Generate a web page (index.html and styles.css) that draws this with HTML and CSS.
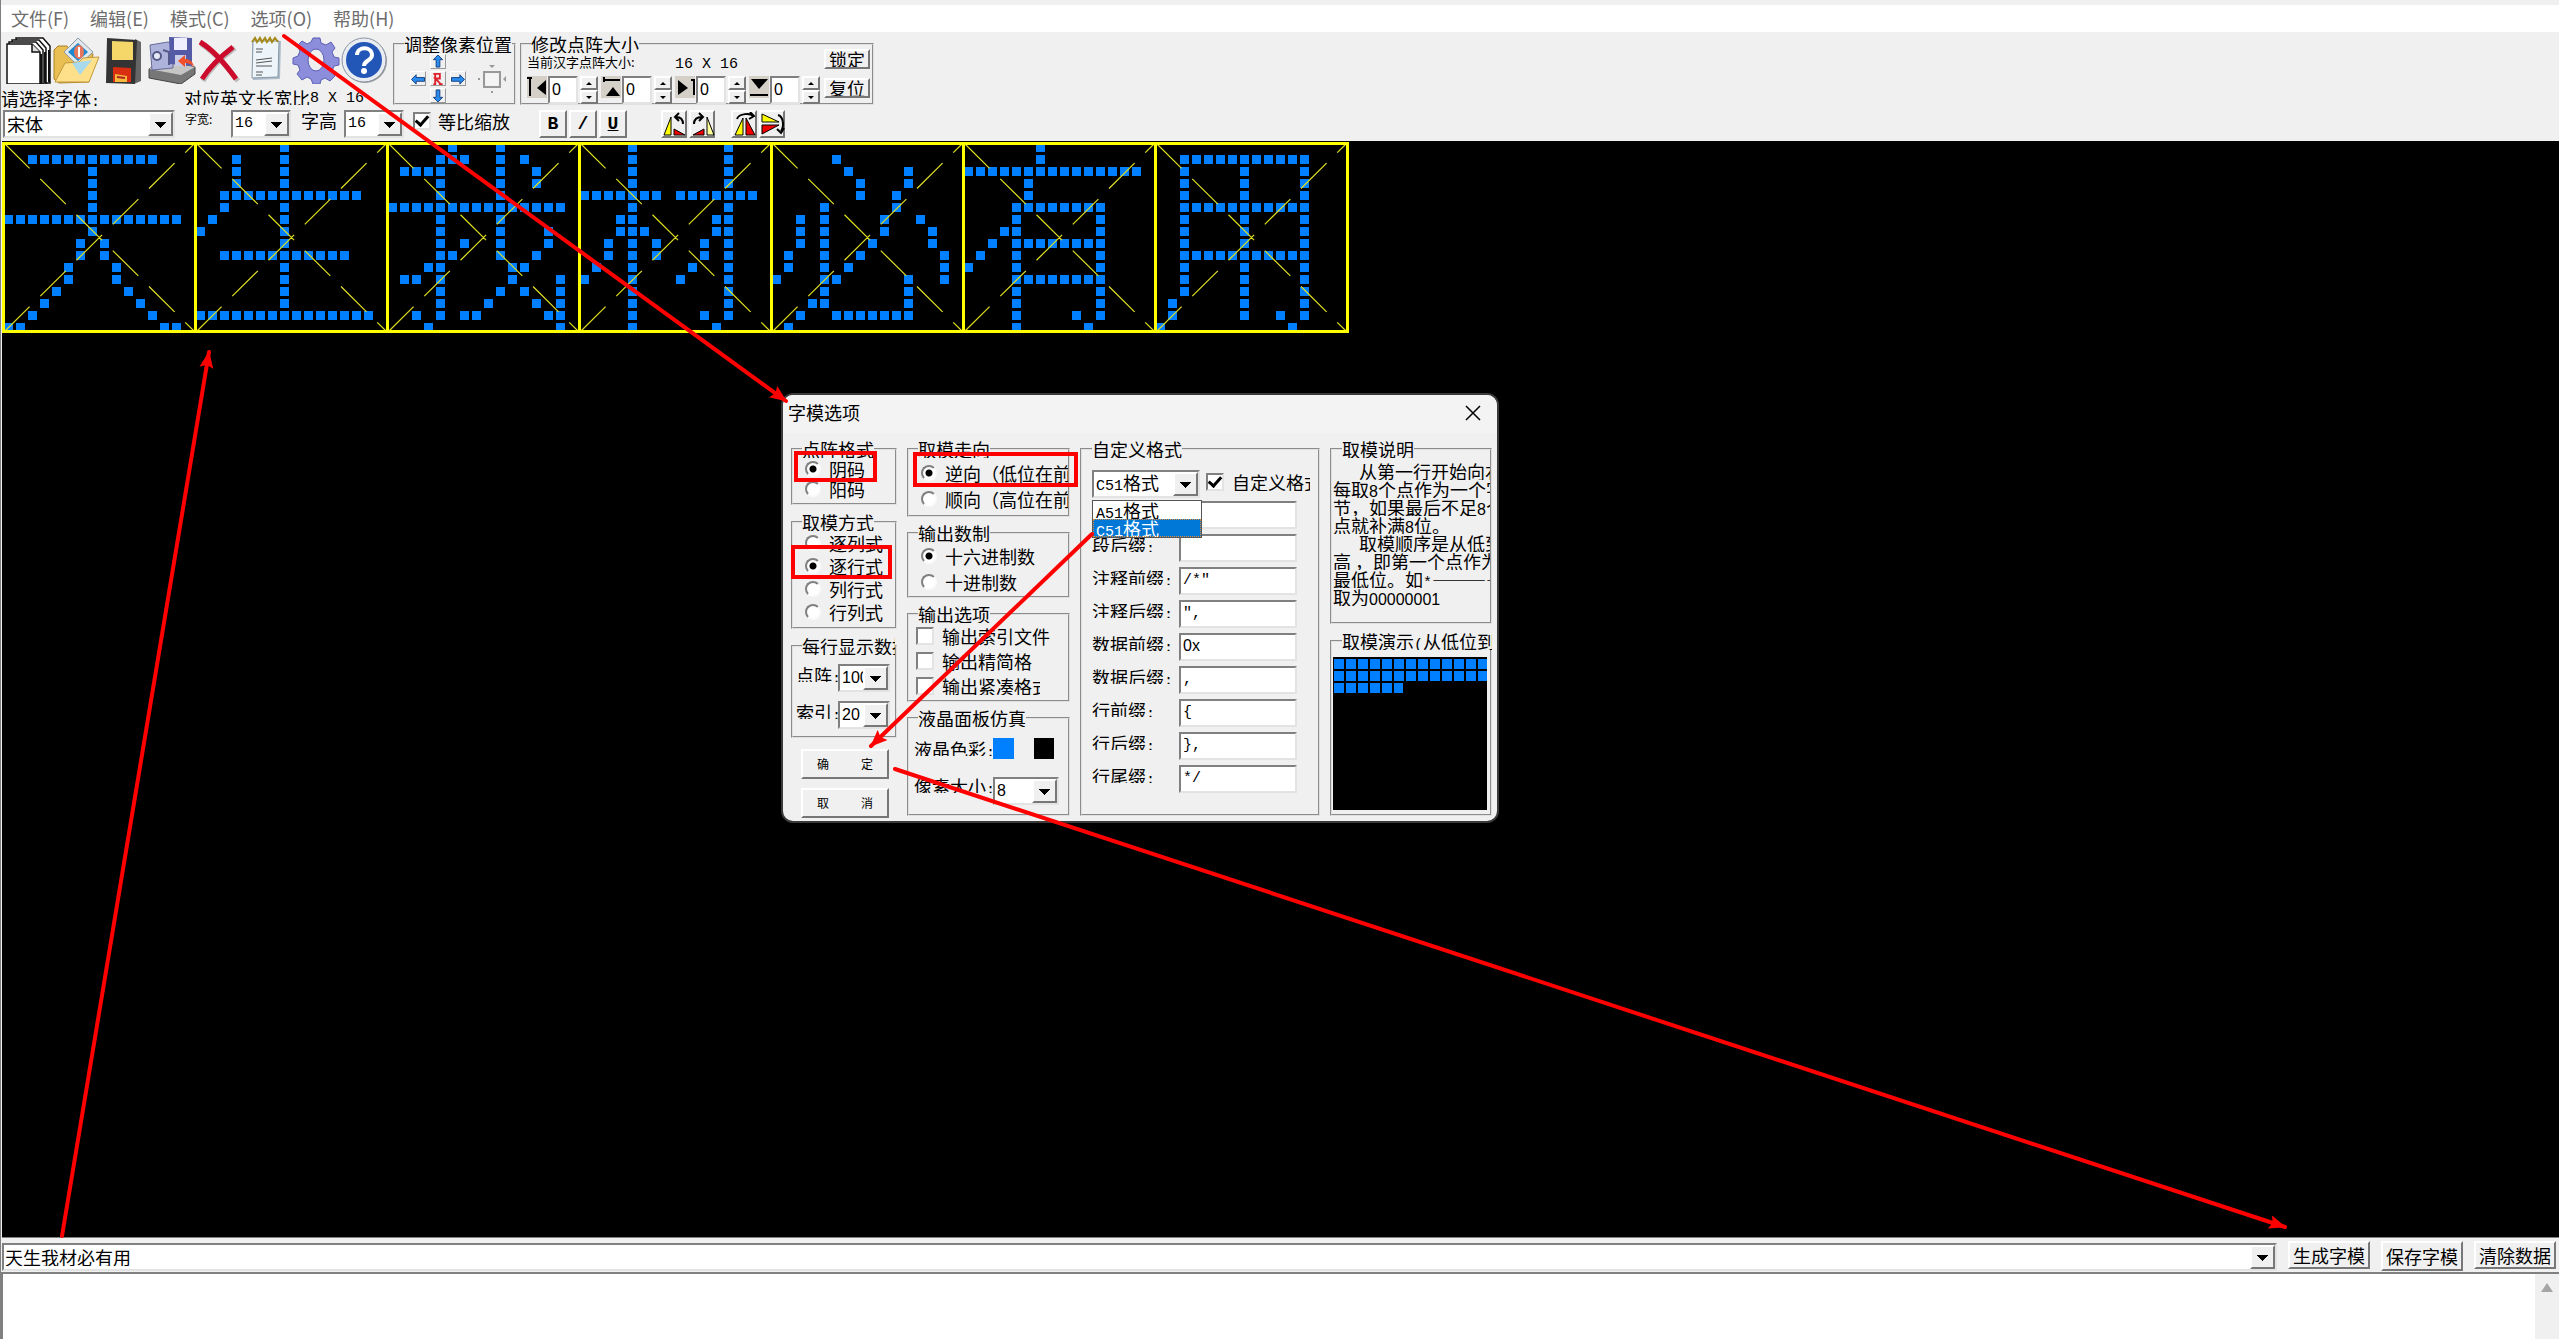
FILE: index.html
```html
<!DOCTYPE html>
<html lang="zh-CN">
<head>
<meta charset="utf-8">
<title>字模提取</title>
<link rel="stylesheet" href="styles.css">
</head>
<body>
<div class="app">
  <nav class="menu">
    <a href="#file">文件(F)</a><a href="#edit">编辑(E)</a><a href="#mode">模式(C)</a><a href="#options">选项(O)</a><a href="#help">帮助(H)</a>
  </nav>

  <header class="toolbar">
    <div class="upper">
      <div class="main-tools">
        <div class="icons">
          <button class="tool" aria-label="新建"><svg viewBox="0 0 48 48"><g fill="#fff" stroke="#111" stroke-width="1.5"><path d="M12 2h27l7 8v37H16z"/><path d="M8 4h27l7 8v36H12z"/><path d="M5 6h27l7 8v34H8z"/><path d="M3 8h25l8 8v32H3z"/></g><path d="M28 8v8h8" fill="#ddd" stroke="#111" stroke-width="1.5"/><path d="M37 18v30M41 16v31M45 14v32" stroke="#111" stroke-width="2"/></svg></button>
          <button class="tool" aria-label="打开"><svg viewBox="0 0 48 48"><path d="M2 14l4-4h9l4 5 22 3-4 28-30 1-5-4z" fill="#e9be52" stroke="#a98227"/><path d="M26 2l15 14-15 14L12 16z" fill="#dfe9ee" stroke="#8d9aa2"/><path d="M26 7l10 9-10 9-10-9z" fill="#1d87cf"/><ellipse cx="27" cy="16" rx="5" ry="7" fill="#e7765d"/><path d="M27 11v10" stroke="#fff" stroke-width="2"/><path d="M3 46l10-19 14-1 4-4 16-1-10 25z" fill="#ffe08a" stroke="#c19a3b"/><path d="M20 27l20-3-12 15z" fill="#a8d9ec"/></svg></button>
          <button class="tool" aria-label="保存"><svg viewBox="0 0 48 48"><path d="M35 3l6 3v39l-7 3z" fill="#666"/><path d="M7 2l30 2-2 44-29-1z" fill="#333"/><path d="M12 5l21 1v18H12z" fill="#f5d769"/><path d="M13 31l18 1v14H13z" fill="#d92e12"/><path d="M15 38l12 2v6H15z" fill="#f6b93c"/><path d="M17 41l8 1" stroke="#a22" stroke-width="2"/></svg></button>
          <button class="tool" aria-label="另存"><svg viewBox="0 0 48 48"><path d="M1 33l12-8 34 6v7L33 48 1 42z" fill="#777" stroke="#444"/><path d="M1 33l12-8 34 6-14 8z" fill="#c6c6c6"/><path d="M2 9l18-3 5 2v24L4 34z" fill="#aeb3dc" stroke="#666a96"/><circle cx="9" cy="20" r="4" fill="#e8e9f7" stroke="#555a88" stroke-width="2"/><path d="M15 14l6 2v13" fill="none" stroke="#555a88" stroke-width="2"/><path d="M21 1l23 1v28l-22-2z" fill="#545aa6"/><path d="M26 2h13v12H26z" fill="#eef"/><path d="M27 19h11v11H27z" fill="#c9cbe8"/><path d="M46 31c-1-6-5-8-9-8v-4l-7 6 7 6v-4c4 0 6 1 9 4z" fill="#f0502a"/></svg></button>
          <button class="tool" aria-label="删除"><svg viewBox="0 0 48 48"><path d="M5 8c10 6 24 20 37 37M39 12C25 22 14 33 7 45" fill="none" stroke="#bbb" stroke-width="5"/><path d="M4 6c10 6 24 20 36 37M37 11C24 21 13 32 6 43" fill="none" stroke="#cc0a2c" stroke-width="5"/></svg></button>
          <button class="tool" aria-label="记事"><svg viewBox="0 0 48 48"><path d="M8 6l29-1-1 38-27 1z" fill="#aebccb"/><path d="M9 5h26l-1 36-26 1z" fill="#edf5fa" stroke="#8797a5"/><path d="M8 6l3-4 2 4 3-4 2 4 3-4 2 4 3-4 2 4 3-4 3 4" fill="none" stroke="#a58a19" stroke-width="2"/><path d="M12 13h7M12 16h6M12 24l16-2M12 27l16-2M12 30h16M12 36h7M12 39h6" stroke="#555"/></svg></button>
          <button class="tool" aria-label="选项"><svg viewBox="0 0 48 48"><path d="M21 2h7l1 5 5 2 5-3 4 6-3 4 2 5 5 1v7l-5 1-2 5 3 5-5 5-5-3-4 2-1 4h-7l-2-5-4-2-5 3-5-6 3-4-2-5-5-1v-6l5-2 2-5-3-5 5-5 5 3 4-2z" fill="#8c8edc" stroke="#5b5eb4"/><ellipse cx="24" cy="24" rx="8" ry="11" fill="#efefef" stroke="#5b5eb4"/></svg></button>
          <button class="tool" aria-label="帮助"><svg viewBox="0 0 48 48"><circle cx="25" cy="25" r="22" fill="#999"/><circle cx="24" cy="24" r="22" fill="#e9edf2" stroke="#8a93a0"/><circle cx="24" cy="24" r="18" fill="#2257b8"/><path d="M17 19c0-9 15-9 15 0 0 6-8 5-8 11" fill="none" stroke="#fff" stroke-width="4"/><circle cx="24" cy="35" r="3" fill="#fff"/></svg></button>
        </div>
        <div class="captions">
          <label class="font-caption" for="font">请选择字体<span class="n">:</span></label>
          <span class="cut">对应英文长宽比</span><span class="n">8 X 16</span>
        </div>
      </div>

      <fieldset class="shift">
        <legend>调整像素位置</legend>
        <div class="shift-body">
          <div class="pad">
            <button class="up" aria-label="上移"><svg viewBox="0 0 14 14"><path d="M7 0l5 5H9v8H5V5H2z" fill="#2b8cf0" stroke="#123c7c"/></svg></button>
            <button class="left" aria-label="左移"><svg viewBox="0 0 14 14"><path d="M0 8l5-5v3h9v4H5v3z" fill="#2b8cf0" stroke="#123c7c"/></svg></button>
            <button class="reset" aria-label="还原"><svg viewBox="0 0 14 14"><path d="M4 13V2h5v5H4l6 6M2 2h2M2 13h3M8 13h4" fill="none" stroke="#e0202c" stroke-width="2"/></svg></button>
            <button class="right" aria-label="右移"><svg viewBox="0 0 14 14"><path d="M14 8L9 3v3H0v4h9v3z" fill="#2b8cf0" stroke="#123c7c"/></svg></button>
            <button class="down" aria-label="下移"><svg viewBox="0 0 14 14"><path d="M7 14l5-5H9V1H5v8H2z" fill="#2b8cf0" stroke="#123c7c"/></svg></button>
          </div>
          <svg class="ghost" viewBox="0 0 28 28"><path d="M6 7h16v15H6z" fill="none" stroke="#999" stroke-width="2"/><path d="M8 9h12v11H8z" fill="#f4f4f4"/><path d="M11 0h6l-3 3zM28 11v6l-3-3zM0 13h2v2H0zM13 26h2v2h-2z" fill="#999"/></svg>
        </div>
      </fieldset>

      <fieldset class="resize">
        <legend>修改点阵大小</legend>
        <div class="resize-body">
          <div class="resize-main">
            <div class="current"><small>当前汉字点阵大小:</small><span class="n">16 X 16</span></div>
            <div class="spinners">
              <div class="spinner"><svg viewBox="0 0 20 20"><path d="M0 1h5M3 1v18" stroke="#000" stroke-width="2"/><path d="M19 3v15l-9-7z"/></svg><input aria-label="左" value="0"><span class="updown"><button aria-label="增"></button><button aria-label="减"></button></span></div>
              <div class="spinner"><svg viewBox="0 0 20 20"><path d="M3 3h16M3 0v5" stroke="#000" stroke-width="2"/><path d="M5 19h14l-7-9z"/></svg><input aria-label="上" value="0"><span class="updown"><button aria-label="增"></button><button aria-label="减"></button></span></div>
              <div class="spinner"><svg viewBox="0 0 20 20"><path d="M16 3h3v15" fill="none" stroke="#000" stroke-width="2"/><path d="M3 3v15l10-7z"/></svg><input aria-label="右" value="0"><span class="updown"><button aria-label="增"></button><button aria-label="减"></button></span></div>
              <div class="spinner"><svg viewBox="0 0 20 20"><path d="M1 18h18" stroke="#000" stroke-width="2"/><path d="M2 2h17l-9 10z"/></svg><input aria-label="下" value="0"><span class="updown"><button aria-label="增"></button><button aria-label="减"></button></span></div>
            </div>
          </div>
          <div class="locks"><button class="btn">锁定</button><button class="btn">复位</button></div>
        </div>
      </fieldset>
    </div>

    <div class="lower">
      <span class="combo font"><select id="font"><option>宋体</option></select></span>
      <label class="tiny" for="w">字宽:</label>
      <span class="combo size"><select id="w" class="num"><option>16</option></select></span>
      <label class="high" for="h">字高</label>
      <span class="combo size"><select id="h" class="num"><option>16</option></select></span>
      <label class="check keep"><input type="checkbox" checked>等比缩放</label>
      <div class="styles"><button class="btn b">B</button><button class="btn i">/</button><button class="btn u">U</button></div>
      <div class="turn">
        <button class="btn" aria-label="左旋"><svg viewBox="0 0 24 24"><path d="M1 23L8 5v18z" fill="#ff0" stroke="#000"/><path d="M11 23v-6l11 6z" fill="#e00" stroke="#000"/><path d="M20 12c0-5-3-7-7-7M16 1l-4 4 4 4" fill="none" stroke="#000" stroke-width="2"/></svg></button>
        <button class="btn" aria-label="右旋"><svg viewBox="0 0 24 24"><path d="M2 23l11-6v6z" fill="#e00" stroke="#000"/><path d="M16 23V5l7 18z" fill="#ff9" stroke="#000"/><path d="M3 12c0-5 3-7 8-7M8 1l4 4-4 4" fill="none" stroke="#000" stroke-width="2"/></svg></button>
      </div>
      <div class="turn flip">
        <button class="btn" aria-label="水平翻转"><svg viewBox="0 0 24 24"><path d="M2 23l8-17v17z" fill="#ff0" stroke="#000"/><path d="M13 23V6l9 17z" fill="#e00" stroke="#000"/><path d="M4 7c2-6 14-6 16-3M17 0l4 4-5 3" fill="none" stroke="#000" stroke-width="2"/></svg></button>
        <button class="btn" aria-label="垂直翻转"><svg viewBox="0 0 24 24"><path d="M1 2l17 8H1z" fill="#ff0" stroke="#000"/><path d="M1 13h17L1 22z" fill="#e00" stroke="#000"/><path d="M17 3c6 2 6 12 3 16M16 17l4 4 3-5" fill="none" stroke="#000" stroke-width="2"/></svg></button>
      </div>
    </div>
  </header>

  <main class="stage"><svg id="glyphs" width="1348" height="196"></svg></main>

  <section class="bottom">
    <div class="entry">
      <span class="combo text"><select aria-label="文字输入"><option>天生我材必有用</option></select></span>
      <button class="btn">生成字模</button><button class="btn">保存字模</button><button class="btn">清除数据</button>
    </div>
    <div class="memo"><textarea aria-label="点阵数据"></textarea><span class="bar"></span></div>
  </section>
</div>

<div class="dialog" role="dialog" aria-labelledby="dlg-title">
  <div class="title"><span id="dlg-title">字模选项</span><button aria-label="关闭"><svg viewBox="0 0 16 16"><path d="M1 1l14 14M15 1L1 15" stroke="#000" stroke-width="1.5"/></svg></button></div>
  <div class="columns">
    <div class="col c1">
      <fieldset class="fmt"><legend>点阵格式</legend>
        <label class="radio"><input type="radio" name="fmt" checked>阴码</label>
        <label class="radio"><input type="radio" name="fmt">阳码</label>
      </fieldset>
      <fieldset class="way"><legend>取模方式</legend>
        <label class="radio"><input type="radio" name="way">逐列式</label>
        <label class="radio"><input type="radio" name="way" checked>逐行式</label>
        <label class="radio"><input type="radio" name="way">列行式</label>
        <label class="radio"><input type="radio" name="way">行列式</label>
      </fieldset>
      <fieldset class="perline"><legend>每行显示数据</legend>
        <div class="pair"><label class="cut" for="dots">点阵<span class="n">:</span></label><span class="combo"><select id="dots" class="digits"><option>100</option></select></span></div>
        <div class="pair"><label class="cut" for="idx">索引<span class="n">:</span></label><span class="combo"><select id="idx" class="digits"><option>20</option></select></span></div>
      </fieldset>
      <div class="actions"><button class="btn"><span>确</span><span>定</span></button><button class="btn"><span>取</span><span>消</span></button></div>
    </div>

    <div class="col c2">
      <fieldset class="dir"><legend>取模走向</legend>
        <label class="radio"><input type="radio" name="dir" checked>逆向（低位在前）</label>
        <label class="radio"><input type="radio" name="dir">顺向（高位在前）</label>
      </fieldset>
      <fieldset class="base"><legend>输出数制</legend>
        <label class="radio"><input type="radio" name="base" checked>十六进制数</label>
        <label class="radio"><input type="radio" name="base">十进制数</label>
      </fieldset>
      <fieldset class="outs"><legend>输出选项</legend>
        <label class="check"><input type="checkbox">输出索引文件</label>
        <label class="check"><input type="checkbox">输出精简格</label>
        <label class="check"><input type="checkbox"><span class="last">输出紧凑格式</span></label>
      </fieldset>
      <fieldset class="lcd"><legend>液晶面板仿真</legend>
        <div class="colors"><span class="cut">液晶色彩<span class="n">:</span></span><button class="on" aria-label="前景色"></button><button class="off" aria-label="背景色"></button></div>
        <div class="pixel"><label class="cut" for="px">像素大小<span class="n">:</span></label><span class="combo"><select id="px" class="digits"><option>8</option></select></span></div>
      </fieldset>
    </div>

    <div class="col c3">
      <fieldset class="custom"><legend>自定义格式</legend>
        <div class="preset">
          <button class="picker" aria-haspopup="listbox" aria-expanded="true"><span class="n">C51</span>格式</button>
          <label class="check"><input type="checkbox" checked><span class="last">自定义格式</span></label>
          <ul class="drop" role="listbox"><li role="option"><span class="n">A51</span>格式</li><li role="option" aria-selected="true" class="sel"><span class="n">C51</span>格式</li></ul>
        </div>
        <div class="fields">
          <span></span><input aria-label="段前缀">
          <label class="cut" for="f2">段后缀<span class="n">:</span></label><input id="f2">
          <label class="cut" for="f3">注释前缀<span class="n">:</span></label><input id="f3" value="/*&quot;">
          <label class="cut" for="f4">注释后缀<span class="n">:</span></label><input id="f4" value="&quot;,">
          <label class="cut" for="f5">数据前缀<span class="n">:</span></label><input id="f5" class="digits" value="0x">
          <label class="cut" for="f6">数据后缀<span class="n">:</span></label><input id="f6" value=",">
          <label class="cut" for="f7">行前缀<span class="n">:</span></label><input id="f7" value="{">
          <label class="cut" for="f8">行后缀<span class="n">:</span></label><input id="f8" value="},">
          <label class="cut" for="f9">行尾缀<span class="n">:</span></label><input id="f9" value="*/">
        </div>
      </fieldset>
    </div>

    <div class="col c4">
      <fieldset class="about"><legend>取模说明</legend>
        <p class="in">从第一行开始向右</p><p>每取<span class="digits">8</span>个点作为一个字</p><p>节，如果最后不足<span class="digits">8</span>个</p><p>点就补满<span class="digits">8</span>位。</p>
        <p class="in">取模顺序是从低到</p><p>高&nbsp;，即第一个点作为</p><p>最低位。如<span class="n">*</span>————</p><p>取为<span class="digits">00000001</span></p>
      </fieldset>
      <fieldset class="demo"><legend>取模演示<span class="n">(</span>从低位到高</legend>
        <svg class="preview" width="154" height="153"><path d="M1 7h156M1 19h156M1 31h69" stroke="#0080ff" stroke-width="10" stroke-dasharray="10 2"/></svg>
      </fieldset>
    </div>
  </div>
</div>

<svg class="notes" width="2559" height="1339" aria-hidden="true">
  <defs><marker id="tip" markerUnits="userSpaceOnUse" markerWidth="18" markerHeight="14" refX="16" refY="7" orient="auto"><path d="M0 0l17 7-17 7 3-7z" fill="#f00"/></marker></defs>
  <g fill="none" stroke="#f00" stroke-width="4">
    <g stroke-linecap="round">
      <path d="M284 36L786 401" marker-end="url(#tip)"/>
      <path d="M1092 534L871 746" marker-end="url(#tip)"/>
      <path d="M895 769L2285 1227" marker-end="url(#tip)"/>
      <path d="M62 1236L209 352" marker-end="url(#tip)"/>
    </g>
    <path d="M796 453h79v27h-79zM915 454h161v31H915zM793 547h97v30h-97z"/>
  </g>
</svg>
<script src="glyphs.js"></script>
</body>
</html>
```
FILE: glyphs.js
```js
// Each glyph is 16 rows split by "|"; a row lists lit columns or column ranges.
const GLYPHS = [
  "|2-12|7|7|7|7|0-14|7|6,8|6,8|5,9|5,9|4,10|3,11|2,12|0,1,13,14",
  "7|3,7|3,7|3,7|2-13|2,7|1,7|0,7|7|2-12|7|7|7|7|0-14|",
  "5,9|4-6,9,11|1-4,9,12|4,9,12|4,9|0-14|4,9|4,9,13|4,6,9,13|4,5,9,12|3,4,10,11|1,2,4,10,14|4,9,11,14|4,8,12,14|2,4,6,7,13,14|3,14",
  "4,12|4,12|4,12|4,12|0-6,8-14|4,12|3,4,11,12|3-5,11,12|2,4,6,10,12|2,4,6,10,12|1,4,9,12|0,4,8,12|4,12|4,12|4,10,12|4,11",
  "|5|6,11|7,11|7,10|4,10|2,4,9,12|2,4,9,13|2,4,8,13|1,4,7,14|1,4,6,14|0,4,5,11,14|4,11|3,4,11|2,5-11|1",
  "6|6|0-14|5|5|4-11|4,11|3,4,11|2,4-11|1,4,11|0,4,11|4-11|4,11|4,11|4,9,11|4,10",
  "|2-12|2,7,12|2,7,12|2,7,12|2-12|2,7,12|2,7,12|2,7,12|2-12|2,7,12|2,7,12|2,7,12|1,7,12|1,7,10,12|0,11"
];
const CELL = 192, STEP = 12, DOT = 9;
let dots = "", lines = "", diagonals = "";
GLYPHS.forEach((glyph, g) => {
  const left = g * CELL;
  glyph.split("|").forEach((row, r) => {
    if (!row) return;
    row.split(",").forEach(run => {
      const [a, b = a] = run.split("-").map(Number);
      for (let c = a; c <= b; c++)
        dots += `M${left + 2 + c * STEP} ${2 + r * STEP}h${DOT}v${DOT}h-${DOT}z`;
    });
  });
  lines += `M${left + 1.5} 2.5h${CELL}v188h-${CELL}z`;
  diagonals += `M${left + 2} 2l${CELL - 1} 189M${left + 2} 191l${CELL - 1} -189`;
});
document.getElementById("glyphs").innerHTML =
  `<path d="${dots}" fill="#0080ff"/>` +
  `<path d="${diagonals}" fill="none" stroke="#e0e020" stroke-width="1.2" stroke-dasharray="36 15"/>` +
  `<path d="${lines}" fill="none" stroke="#ffff00" stroke-width="3"/>`;
```
FILE: styles.css
```css
*, *::before, *::after { box-sizing: border-box; }
body { margin: 0; background: #000; color: #000; font: 18px/18px "Noto Sans CJK SC", sans-serif; }
button, input, select, textarea { font: inherit; color: inherit; margin: 0; padding: 0; border: 0; border-radius: 0; }
button { background: none; white-space: nowrap; }
fieldset { margin: 0; padding: 0; min-width: 0; border: 2px groove #e0e0e0; }
legend { padding: 0; margin-left: 9px; white-space: nowrap; overflow: hidden; height: 18px; }
.n { font: 15px/18px "Liberation Mono", monospace; white-space: pre; }
.digits { font: 16px/18px "Liberation Sans", sans-serif; }
.cut { height: 16px; overflow: hidden; white-space: nowrap; }

.app { display: flex; flex-direction: column; height: 100vh; background: #f0f0f0; border-left: 1px solid #808080; padding-top: 5px; }
.menu { display: flex; height: 27px; background: #fff; }
.menu a { padding: 4px 11px 0 10px; color: #6d6d6d; text-decoration: none; }

/* toolbar */
.toolbar { height: 109px; }
.upper { display: flex; height: 76px; }
.main-tools { width: 392px; padding: 3px 0 0 3px; }
.icons { display: flex; }
.tool { width: 48px; height: 50px; }
.tool svg { display: block; width: 48px; height: 48px; }
.captions { display: flex; padding-top: 4px; margin-left: -3px; }
.font-caption { width: 183px; }
.captions > .n { padding-top: 1px; }
.shift { width: 123px; height: 70px; margin-top: 3px; }
.shift-body { display: flex; align-items: center; gap: 10px; padding-left: 13px; }
.pad { display: grid; grid-template: repeat(3, 17px) / repeat(3, 20px); place-items: center; }
.pad button { width: 16px; height: 15px; border: 1px solid; border-color: #fff #999 #999 #fff; }
.pad svg { display: block; width: 14px; height: 13px; }
.up { grid-area: 1 / 2; } .left { grid-area: 2 / 1; } .reset { grid-area: 2 / 2; } .right { grid-area: 2 / 3; } .down { grid-area: 3 / 2; }
.ghost { width: 28px; height: 28px; }
.resize { width: 354px; height: 70px; margin: 3px 0 0 4px; }
.resize-body { display: flex; padding-left: 5px; }
.resize-main { width: 297px; }
.current { display: flex; height: 23px; }
.current small { width: 148px; font-size: 13px; white-space: nowrap; }
.current .n { padding-top: 3px; }
.spinners { display: flex; }
.spinner { display: flex; width: 74px; }
.spinner svg { width: 20px; height: 22px; margin-right: 1px; background: #d4d0c8; }
.spinner input { width: 30px; height: 28px; padding-left: 2px; font: 16px/18px "Liberation Sans", sans-serif; }
.updown { display: grid; width: 18px; margin-left: 2px; }
.updown button { display: grid; place-items: center; height: 14px; }
.updown button::after { content: ""; border: 3px solid transparent; border-top: 0; border-bottom-color: #000; }
.updown button:last-child::after { border-top: 3px solid #000; border-bottom: 0; }
.locks { display: grid; gap: 9px; align-content: start; margin-top: -4px; }
.locks .btn { width: 46px; height: 20px; overflow: hidden; }

.btn, .updown button { background: #f0f0f0; border: 2px solid; border-color: #fff #777 #777 #fff; }
.btn { line-height: 16px; }
.spinner input, .combo, .picker, .fields input { background: #fff; border: 2px solid; border-color: #808080 #e3e3e3 #e3e3e3 #808080; }

.lower { display: flex; padding: 2px 0 0 2px; }
.combo { position: relative; display: block; height: 28px; }
.combo select { display: block; appearance: none; width: 100%; height: 24px; padding: 0 22px 0 2px; background: none; outline: 0; text-overflow: clip; }
.combo select.num { font: 15px/20px "Liberation Mono", monospace; }
.combo::after, .picker::after { content: ""; position: absolute; right: 0; top: 0; width: 25px; height: 100%; border: 2px solid; border-color: #fff #777 #777 #fff; pointer-events: none;
  background: linear-gradient(#000, #000) 50% 8px / 11px 1px no-repeat, linear-gradient(#000, #000) 50% 9px / 9px 1px no-repeat, linear-gradient(#000, #000) 50% 10px / 7px 1px no-repeat, linear-gradient(#000, #000) 50% 11px / 5px 1px no-repeat, linear-gradient(#000, #000) 50% 12px / 3px 1px no-repeat, linear-gradient(#000, #000) 50% 13px / 1px 1px no-repeat, #f0f0f0; }
.font { width: 172px; }
.tiny { width: 56px; padding-left: 10px; font-size: 12px; }
.size { width: 60px; }
.high { width: 53px; padding: 1px 0 0 10px; }
.check, .radio { display: flex; align-items: center; white-space: nowrap; overflow: hidden; }
.check input { appearance: none; flex: none; display: grid; place-items: center; width: 18px; height: 18px; background: #fff; border: 2px solid; border-color: #808080 #e3e3e3 #e3e3e3 #808080; }
.check input:checked::after { content: ""; width: 8px; height: 13px; margin-top: -3px; border: solid #000; border-width: 0 3px 3px 0; transform: rotate(42deg); }
.keep { height: 22px; width: 126px; margin-left: 9px; gap: 7px; }
.styles { display: flex; gap: 2px; }
.styles .btn { width: 28px; height: 28px; font: bold 18px/20px "Liberation Mono", monospace; }
.u { text-decoration: underline; }
.turn { display: flex; gap: 2px; margin-left: 34px; }
.flip { margin-left: 16px; }
.turn .btn { width: 26px; height: 28px; }
.turn svg { display: block; width: 24px; height: 24px; }

.stage { flex: 1; min-height: 0; margin-left: 1px; background: #000; border-bottom: 1px solid #808080; }
#glyphs { display: block; }

/* text entry and output */
.entry { display: flex; height: 34px; padding: 3px 3px 0 1px; }
.entry .btn { width: 82px; height: 28px; margin-left: 11px; line-height: 20px; }
.entry .btn + .btn { height: 30px; }
.entry .btn:last-child { height: 28px; }
.text { flex: 1; margin-top: 2px; }
.text select { padding-left: 1px; }
.memo { display: flex; height: 67px; background: #fff; border: 2px solid #808080; border-width: 2px 0 0 2px; }
.memo textarea { flex: 1; resize: none; outline: 0; background: #fff; }
.bar { width: 24px; padding: 9px 0 0 6px; background: #f0f0f0; }
.bar::after { content: ""; display: block; width: 12px; border: 6px solid transparent; border-top: 0; border-bottom: 9px solid #a6a6a6; }

/* options dialog */
.dialog { position: absolute; left: 781px; top: 393px; width: 718px; height: 430px; background: #f0f0f0; border: 2px solid #3a3a3a; border-radius: 12px; overflow: hidden; }
.title { display: flex; justify-content: space-between; height: 38px; padding: 8px 16px 0 5px; background: #f3f3f3; }
.title button { width: 16px; height: 18px; padding-top: 2px; }
.title button svg { display: block; }
.columns { display: flex; gap: 10px; padding: 7px 0 0 8px; }
.col { display: flex; flex-direction: column; gap: 8px; }
.c1 { width: 106px; } .c2 { width: 163px; gap: 7px; } .c3 { width: 240px; } .c4 { width: 162px; }
.radio input { appearance: none; flex: none; width: 16px; height: 16px; margin: 0 8px 0 12px; border-radius: 50%; border: 2px solid; border-color: #808080 #fafafa #fafafa #808080; background: #fff; }
.radio input:checked { background: radial-gradient(circle, #000 0 3px, #fff 4px); }
.fmt { padding: 1px 0 4px; } .fmt .radio { height: 20px; }
.way { padding-bottom: 4px; } .way .radio { height: 23px; }
.perline { padding: 9px 0 7px; }
.perline legend { max-width: 93px; }
.pair { display: flex; padding-left: 3px; }
.pair + .pair { margin-top: 9px; }
.pair .cut { width: 42px; margin-top: 2px; }
.pair .combo { width: 52px; }
.actions { display: grid; gap: 9px; margin: 3px 0 0 10px; }
.actions .btn { display: flex; justify-content: center; gap: 32px; align-items: center; width: 88px; height: 30px; font-size: 12px; }
.dir { padding: 2px 0 3px; } .dir .radio, .base .radio { height: 26px; }
.base { padding: 1px 0; }
.outs { padding-bottom: 2px; }
.outs .check { height: 25px; padding-left: 7px; gap: 8px; }
.last { overflow: hidden; width: 98px; }
.lcd { padding: 11px 0 9px 5px; }
.lcd legend { margin-left: 4px; }
.colors { display: flex; align-items: center; height: 20px; margin-bottom: 19px; }
.colors .cut, .pixel .cut { width: 79px; }
.on { width: 21px; height: 21px; background: #0080ff; }
.off { width: 20px; height: 21px; margin-left: 20px; background: #000; }
.pixel { display: flex; }
.pixel .combo { width: 66px; }
.custom { padding: 12px 0 21px 10px; }
.custom legend { margin-left: 0; }
.preset { position: relative; display: flex; margin-bottom: 3px; }
.picker { position: relative; width: 108px; height: 28px; padding-left: 2px; text-align: left; }
.preset .check { margin-left: 6px; gap: 8px; height: 24px; }
.preset .last { width: 78px; }
.drop { position: absolute; left: 0; top: 30px; width: 110px; margin: 0; padding: 0; list-style: none; background: #fff; border: 1px solid #555; }
.drop li { height: 18px; padding-left: 3px; overflow: hidden; }
.drop .sel { background: #0078d7; color: #fff; outline: 1px dotted #e08a3c; outline-offset: -1px; }
.fields { display: grid; grid-template-columns: 87px 118px; row-gap: 5px; }
.fields input { height: 28px; padding: 0 2px 2px; font: 15px/18px "Liberation Mono", monospace; }
.fields .digits { font: 16px/18px "Liberation Sans", sans-serif; }
.fields .cut { margin-top: 2px; }
.about { padding: 4px 0 16px 1px; }
.about p { height: 18px; margin: 0; white-space: nowrap; overflow: hidden; }
.about .in { padding-left: 26px; }
.demo { padding: 7px 0 4px 1px; }
.demo legend { max-width: 150px; }
.preview { display: block; background: #000; }

.notes { position: absolute; left: 0; top: 0; pointer-events: none; }
```
